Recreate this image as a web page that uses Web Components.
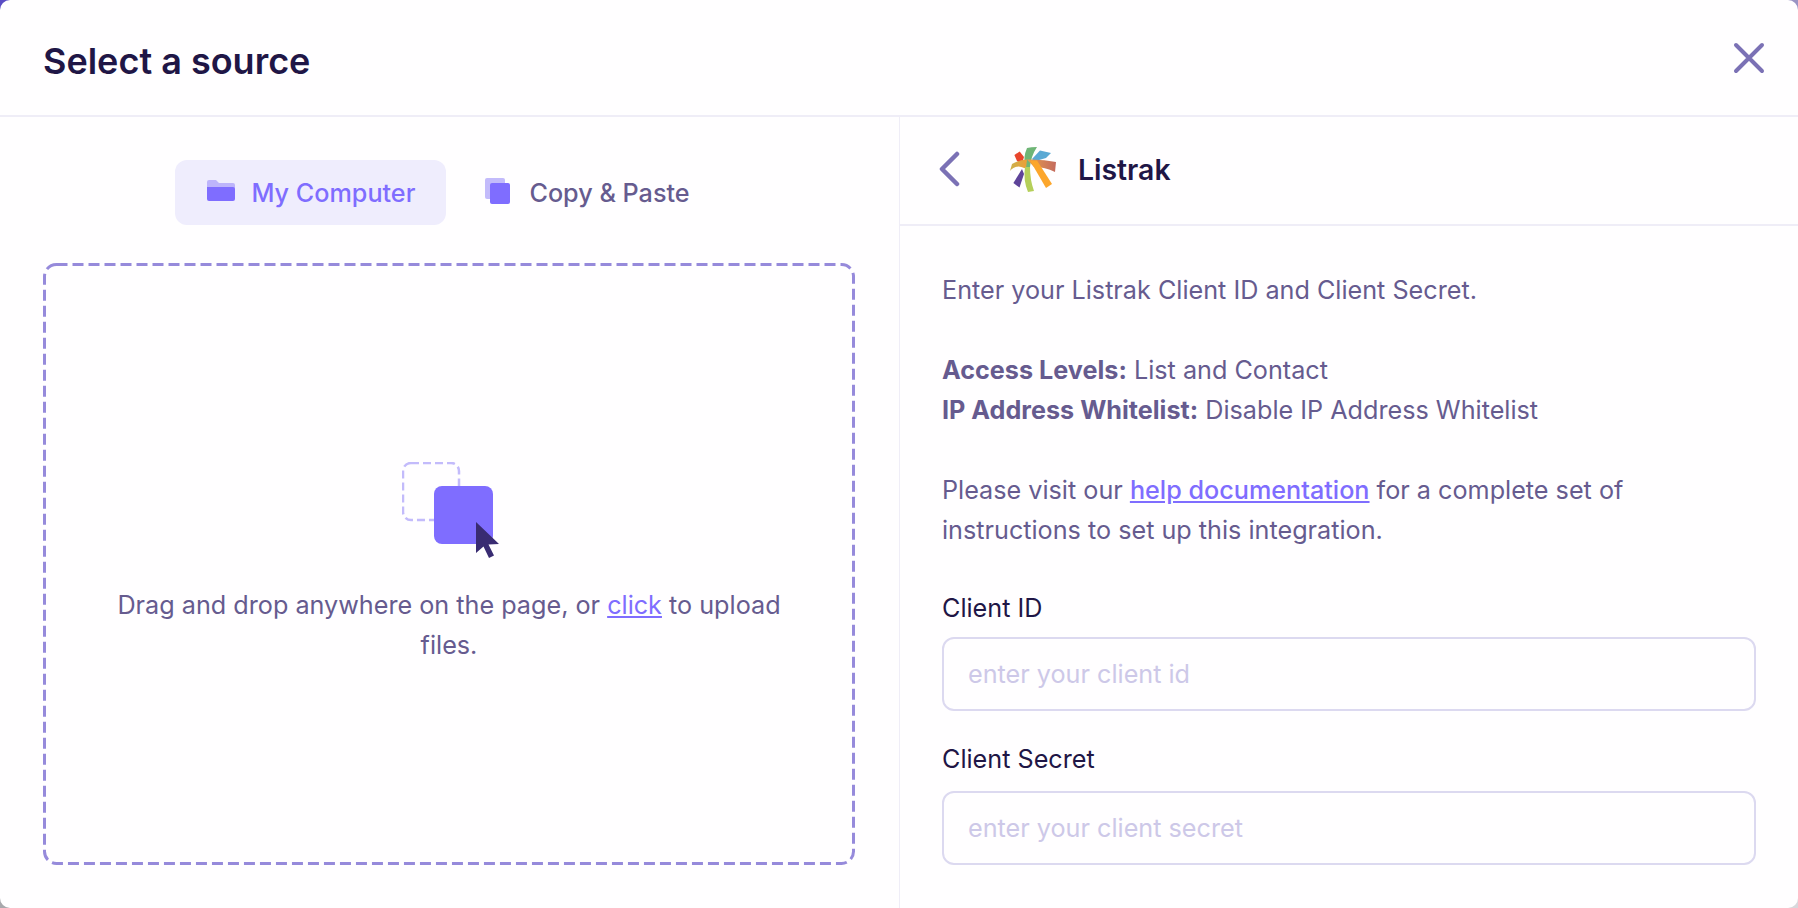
<!doctype html>
<html>
<head>
<meta charset="utf-8">
<title>Select a source</title>
<style>
  html, body { margin: 0; height: 100%; }
  body { background: conic-gradient(#9a94c4 0 25%, #d8d8dc 25% 50%, #a8a8ac 50% 75%, #5a4cc4 75%); font-family: Inter, "Liberation Sans", sans-serif; overflow: hidden; }
  integration-panel a { color: #7f6dff; font-weight: 500; }
</style>
</head>
<body>
<source-modal heading="Select a source">
  <div slot="left">
    <tab-bar>
      <tab-item active label="My Computer" icon="folder"></tab-item>
      <tab-item label="Copy &amp; Paste" icon="copy"></tab-item>
    </tab-bar>
    <drop-zone></drop-zone>
  </div>
  <integration-panel slot="right" name="Listrak">
    <p>Enter your Listrak Client ID and Client Secret.</p>
    <p><b>Access Levels:</b> List and Contact<br><b>IP Address Whitelist:</b> Disable IP Address Whitelist</p>
    <p>Please visit our <a href="#">help documentation</a> for a complete set of instructions to set up this integration.</p>
    <form-field style="--label-gap: 9px" label="Client ID" placeholder="enter your client id"></form-field>
    <form-field style="--label-gap: 12px" label="Client Secret" placeholder="enter your client secret"></form-field>
  </integration-panel>
</source-modal>

<script>
  const ICONS = {
    folder: `<svg style="margin-right:-1px" width="28" height="22" viewBox="0 0 28 22">
      <path d="M0 2a2 2 0 0 1 2-2h7l3 3h14a2 2 0 0 1 2 2v4H0z" fill="#bdb4fb"/>
      <path d="M0 7h26a2 2 0 0 1 2 2v10a2 2 0 0 1-2 2H2a2 2 0 0 1-2-2z" fill="#7f6dff"/>
    </svg>`,
    copy: `<svg style="margin-right:2px" width="25" height="26" viewBox="0 0 25 26">
      <rect x="0" y="0" width="20" height="21" rx="2" fill="#c3bbfb"/>
      <rect x="5" y="5" width="20" height="21" rx="2" fill="#7f6dff"/>
    </svg>`
  };

  customElements.define('source-modal', class extends HTMLElement {
    constructor() {
      super();
      this.attachShadow({ mode: 'open' }).innerHTML = `
        <style>
          :host { display: flex; flex-direction: column; height: 908px; background: #fffeff; border-radius: 10px; overflow: hidden; box-sizing: border-box; }
          header { height: 115px; flex: none; display: flex; align-items: center; justify-content: space-between; padding: 0 33px 0 43px; border-bottom: 2px solid #efedf7; }
          h1 { margin: 7px 0 0; font-size: 36px; font-weight: 600; color: #1f1646; }
          .close { display: block; }
          main { flex: 1; display: grid; grid-template-columns: 899px 1fr; min-height: 0; }
          .right { border-left: 1px solid #efedf7; min-width: 0; }
        </style>
        <header>
          <h1>${this.getAttribute('heading')}</h1>
          <svg class="close" width="32" height="32" viewBox="0 0 32 32" fill="none" stroke="#7b71b5" stroke-width="4" stroke-linecap="round"><path d="M3 3l26 26M29 3L3 29"/></svg>
        </header>
        <main>
          <div class="left"><slot name="left"></slot></div>
          <div class="right"><slot name="right"></slot></div>
        </main>`;
    }
  });

  customElements.define('tab-bar', class extends HTMLElement {
    constructor() {
      super();
      this.attachShadow({ mode: 'open' }).innerHTML = `
        <style>
          :host { display: flex; justify-content: center; gap: 7px; padding: 43px 3px 0 0; }
        </style>
        <slot></slot>`;
    }
  });

  customElements.define('tab-item', class extends HTMLElement {
    constructor() {
      super();
      const active = this.hasAttribute('active');
      this.attachShadow({ mode: 'open' }).innerHTML = `
        <style>
          :host { display: flex; align-items: center; gap: 17px; height: 65px; padding: 0 31px 0 32px; border-radius: 12px; box-sizing: border-box; font-size: 25.2px; font-weight: 500;
            color: ${active ? '#7f6dff' : '#665b8f'}; background: ${active ? '#efedfd' : 'transparent'}; }
          svg { display: block; margin-top: -3px; }
        </style>
        ${ICONS[this.getAttribute('icon')]}
        <span>${this.getAttribute('label')}</span>`;
    }
  });

  customElements.define('drop-zone', class extends HTMLElement {
    constructor() {
      super();
      this.attachShadow({ mode: 'open' }).innerHTML = `
        <style>
          :host { display: flex; flex-direction: column; align-items: center; position: relative; box-sizing: border-box; height: 602px; margin: 38px 44px 0 43px; padding: 199px 60px 0; color: #665b8f; font-size: 25.2px; line-height: 40px; text-align: center; }
          .dash { position: absolute; inset: 0; width: 100%; height: 100%; pointer-events: none; }
          .art { display: block; margin-bottom: 25px; transform: translateX(3px); }
          a { color: #7f6dff; }
        </style>
        <svg class="dash"><rect x="1.5" y="1.5" width="calc(100% - 3px)" height="calc(100% - 3px)" rx="12" fill="none" stroke="#968adb" stroke-width="3" stroke-dasharray="11 5"/></svg>
        <svg class="art" width="100" height="98" viewBox="0 0 100 98">
          <rect x="1" y="1" width="56" height="57" rx="8" fill="none" stroke="#c3bbfb" stroke-width="2.5" stroke-dasharray="8 4"/>
          <rect x="32" y="24" width="59" height="58" rx="8" fill="#7f6dff"/>
          <path d="M74 60v31l7.500-6.500 5.500 11.500 5-2.500-5.500-11 10.500-.5z" fill="#392b72"/>
        </svg>
        <div>Drag and drop anywhere on the page, or <a href="#">click</a> to upload files.</div>`;
    }
  });

  customElements.define('integration-panel', class extends HTMLElement {
    constructor() {
      super();
      this.attachShadow({ mode: 'open' }).innerHTML = `
        <style>
          :host { display: block; }
          .top { height: 104px; display: flex; align-items: center; padding: 0 0 3px 39px; border-bottom: 2px solid #efedf7; }
          .back { display: block; }
          .logo { display: block; margin: 2px 0 0 49px; }
          h2 { margin: 0 0 0 22px; font-size: 28.4px; font-weight: 600; color: #1f1646; }
          .body { padding: 44px 42px 0 42px; color: #665b8f; font-size: 25.2px; line-height: 40px; }
          ::slotted(p) { margin: 0 0 40px; }
          ::slotted(p:last-of-type) { margin-bottom: 38px; }
        </style>
        <div class="top">
          <svg class="back" width="22" height="36" viewBox="0 0 22 36" fill="none" stroke="#7b71b5" stroke-width="4.500" stroke-linecap="round" stroke-linejoin="round"><path d="M18 3L3 18l15 15"/></svg>
          <svg class="logo" width="46" height="46" viewBox="0 0 46 46">
            <defs>
              <linearGradient id="band-r" x1="0" x2="1" y1="0" y2="0"><stop offset="0" stop-color="#e7a04a"/><stop offset="1" stop-color="#c46a5e"/></linearGradient>
              <linearGradient id="band-l" x1="0" x2="1" y1="0" y2="0"><stop offset="0" stop-color="#c9b24f"/><stop offset="1" stop-color="#ee9e35"/></linearGradient>
            </defs>
            <path d="M17 1Q21 0 27 0Q21 9 20 20H15Q13 10 17 1z" fill="#6fb576"/>
            <path d="M22 12L30 3.400 41 6 36 11 24 14.600z" fill="#5aa9d4"/>
            <path d="M4.400 8L9.700 4.400 14 10 12 17 7 14z" fill="#e8452c"/>
            <path d="M17 12.500Q33 12 46 15L45 25Q35 20 24 20z" fill="url(#band-r)"/>
            <path d="M0 24L2 17Q9 13 17 12.500L16 21.500Q9 19 8.500 19.500Q3 20 0 24z" fill="url(#band-l)"/>
            <path d="M12 22L3.400 36 9.500 40.500 14 27z" fill="#5e4399"/>
            <path d="M15 20H20Q20 33 24 44L18 45Q13 33 15 20z" fill="#b5cf5a"/>
            <path d="M20 13.600H27L42 37 36 41z" fill="#fca62c"/>
          </svg>
          <h2>${this.getAttribute('name')}</h2>
        </div>
        <div class="body"><slot></slot></div>`;
    }
  });

  customElements.define('form-field', class extends HTMLElement {
    constructor() {
      super();
      this.attachShadow({ mode: 'open' }).innerHTML = `
        <style>
          :host { display: block; margin-bottom: 28px; }
          label { display: block; font-size: 25.2px; line-height: 40px; color: #1f1646; margin-bottom: var(--label-gap, 11px); }
          .input { box-sizing: border-box; height: 74px; border: 2px solid #dcd9f0; border-radius: 12px; padding: 0 24px; display: flex; align-items: center; color: #cdc8e8; font-size: 25.2px; }
        </style>
        <label>${this.getAttribute('label')}</label>
        <div class="input">${this.getAttribute('placeholder')}</div>`;
    }
  });
</script>
</body>
</html>
